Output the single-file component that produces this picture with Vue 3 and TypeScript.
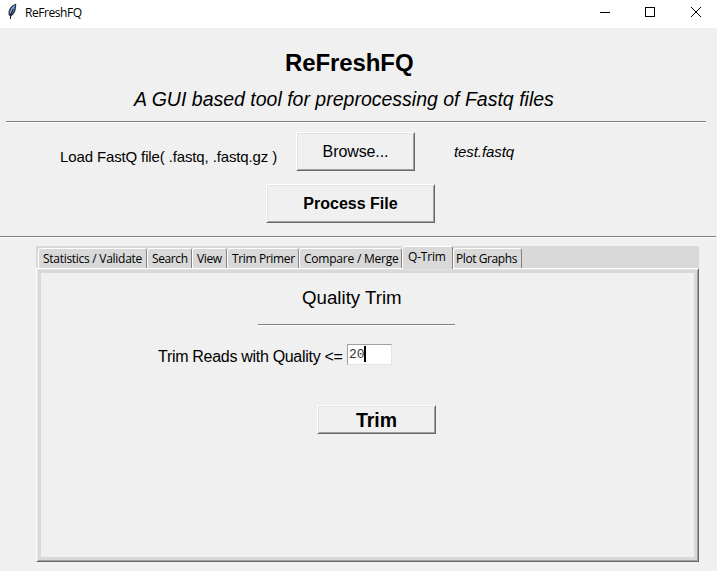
<script setup lang="ts">
import { ref } from 'vue'

interface Tab {
  id: string
  label: string
}

const tabs: Tab[] = [
  { id: 'stats', label: 'Statistics / Validate' },
  { id: 'search', label: 'Search' },
  { id: 'view', label: 'View' },
  { id: 'primer', label: 'Trim Primer' },
  { id: 'merge', label: 'Compare / Merge' },
  { id: 'qtrim', label: 'Q-Trim' },
  { id: 'plot', label: 'Plot Graphs' },
]
const active = ref('qtrim')
const fileName = ref('test.fastq')
const quality = ref('20')
</script>

<template>
  <div class="window">
    <header class="titlebar">
      <svg class="feather" width="10" height="17" viewBox="0 0 10 17">
        <path d="M8.2 .8C4.8 1.4 1.6 4.4 .7 8.2L.5 11.6 2 13.4 4.8 12C7.2 9.6 8.4 6 8.2 .8Z" fill="#27313e" />
        <path d="M7.2 2C5 3.2 2.8 6 2.3 9.6L3.4 11.4C6 9 7.1 5.5 7.2 2Z" fill="#4f8fd8" />
        <path d="M6.2 2.6C4.2 4.4 2.6 7.2 2.2 10.6" fill="none" stroke="#a9c6e8" stroke-width=".9" />
        <path d="M5.4 6C4 8.4 2.7 11 2.4 16" fill="none" stroke="#101010" stroke-width="1" />
      </svg>
      <span class="caption">ReFreshFQ</span>
      <svg class="controls" width="102" height="10" viewBox="0 0 102 10" fill="none" stroke="#000" stroke-width="1">
        <path d="M0 5.5H10" shape-rendering="crispEdges" />
        <path d="M45.5 .5H54.5V9.5H45.5Z" shape-rendering="crispEdges" />
        <path d="M91 0L101 10M101 0L91 10" />
      </svg>
    </header>

    <h1 class="t title">ReFreshFQ</h1>
    <p class="t subtitle">A GUI based tool for preprocessing of Fastq files</p>
    <div class="sep sep-top"></div>

    <div class="load-row">
      <span class="t load-label">Load FastQ file( .fastq, .fastq.gz )</span>
      <button class="btn browse"><span class="t">Browse...</span></button>
      <span class="t file-name">{{ fileName }}</span>
    </div>
    <button class="btn process"><span class="t">Process File</span></button>
    <div class="sep sep-full"></div>

    <section class="notebook">
      <nav class="tabs">
        <button
          v-for="tab in tabs"
          :key="tab.id"
          class="tab"
          :class="[tab.id, { selected: tab.id === active }]"
          @click="active = tab.id"
        ><span class="t">{{ tab.label }}</span></button>
      </nav>
      <div class="pane">
        <div class="inner">
          <h2 class="t heading">Quality Trim</h2>
          <div class="sep sep-short"></div>
          <div class="quality-row">
            <span class="t quality-label">Trim Reads with Quality &lt;=</span>
            <div class="entry"><span class="t">{{ quality }}</span><i class="caret"></i></div>
          </div>
          <button class="btn trim"><span class="t">Trim</span></button>
        </div>
      </div>
    </section>
  </div>
</template>

<style>
body { margin: 0; background: #f0f0f0; }
</style>

<style scoped>
* { box-sizing: border-box; }
.window {
  width: 717px;
  height: 571px;
  overflow: hidden;
  background: #f0f0f0;
  color: #000;
  font-family: "Liberation Sans", Arial, sans-serif;
  display: flex;
  flex-direction: column;
  align-items: flex-start;
}
.t { white-space: pre; display: block; }
.titlebar {
  width: 717px;
  height: 28px;
  background: #fff;
  display: flex;
  flex: none;
}
.feather { margin: 3px 0 0 8px; flex: none; }
.caption {
  width: 575px;
  margin: 4px 0 0 7px;
  font: 12px/18px "Open Sans", "Noto Sans", sans-serif;
  letter-spacing: -0.45px;
}
.controls { margin: 7px 0 0; flex: none; }
.title {
  margin: 21px 0 0 285px;
  font-size: 24px;
  line-height: 28px;
  font-weight: 700;
  letter-spacing: -0.1px;
}
.subtitle {
  margin: 11px 0 0 134px;
  font-size: 19.5px;
  line-height: 22px;
  font-style: italic;
}
.sep { height: 2px; flex: none; background: #fff; border-top: 1px solid #808080; }
.sep-top { width: 700px; margin: 11px 0 0 6px; }
.sep-full { width: 716px; margin-top: 13px; }
.load-row {
  margin: 9px 0 0 60px;
  height: 39px;
  display: flex;
  align-items: flex-start;
}
.load-label { width: 236px; margin-top: 16px; font-size: 15px; line-height: 18px; letter-spacing: -0.13px; }
.file-name { margin: 11px 0 0 39px; font-size: 15px; line-height: 18px; font-style: italic; letter-spacing: -0.08px; }
.btn {
  display: flex;
  justify-content: center;
  align-items: center;
  flex: none;
  padding: 0;
  background: #f0f0f0;
  color: #000;
  border: 1px solid;
  border-color: #fff #696969 #696969 #fff;
  box-shadow: inset 1px 1px #e3e3e3, inset -1px -1px #a0a0a0;
  font-family: inherit;
}
.browse { width: 119px; height: 39px; font-size: 16px; line-height: 18px; letter-spacing: -0.1px; }
.process {
  width: 169px;
  height: 39px;
  margin: 13px 0 0 266px;
  font-size: 16px;
  line-height: 18px;
  font-weight: 700;
}
.notebook { width: 663px; margin: 8px 0 0 36px; }
.tabs {
  height: 22px;
  padding-left: 2px;
  background: #d9d9d9;
  display: flex;
  align-items: flex-end;
}
.tab {
  height: 20px;
  padding: 0 0 0 4px;
  background: #d9d9d9;
  border: 1px solid #fff;
  border-right-color: #828282;
  border-bottom: 0;
  border-radius: 3px 3px 0 0;
  color: #000;
  font: 12px/18px "Open Sans", "Noto Sans", sans-serif;
  letter-spacing: -0.28px;
  text-align: left;
  display: flex;
}
.stats { width: 109px; }
.search { width: 45px; letter-spacing: -0.4px; }
.view { width: 35px; letter-spacing: -0.4px; }
.primer { width: 72px; letter-spacing: -0.36px; }
.merge { width: 103px; letter-spacing: -0.22px; }
.qtrim { width: 51px; letter-spacing: -0.2px; }
.plot { width: 69px; padding-left: 2px; letter-spacing: -0.42px; }
.tab .t { margin-top: 1px; }
.tab.selected { height: 23px; margin-bottom: -1px; padding-left: 5px; z-index: 1; }
.pane {
  height: 294px;
  padding: 4px;
  background: #d9d9d9;
  border: 1px solid;
  border-color: #fff #696969 #696969 #fff;
  box-shadow: inset 1px 1px #e3e3e3, inset -1px -1px #a0a0a0;
}
.inner {
  height: 284px;
  background: #f0f0f0;
  display: flex;
  flex-direction: column;
  align-items: flex-start;
}
.heading { margin: 14px 0 0 261px; font-size: 18.7px; line-height: 22px; font-weight: 400; }
.sep-short { width: 197px; margin: 15px 0 0 217px; }
.quality-row { margin: 18px 0 0 117px; display: flex; height: 22px; }
.quality-label { width: 189px; margin-top: 3px; font-size: 16px; line-height: 20px; letter-spacing: -0.3px; }
.entry {
  width: 45px;
  height: 21px;
  background: #fff;
  border: 1px solid;
  border-color: #a0a0a0 #e3e3e3 #e3e3e3 #a0a0a0;
  display: flex;
  padding: 1px 0 0 1px;
  color: #333;
  font: 13px/17px "Liberation Mono", monospace;
}
.caret { width: 2px; height: 16px; margin-left: -1px; background: #000; }
.trim {
  width: 119px;
  height: 29px;
  margin: 39px 0 0 276px;
  font-size: 19.5px;
  line-height: 22px;
  font-weight: 700;
}
</style>
